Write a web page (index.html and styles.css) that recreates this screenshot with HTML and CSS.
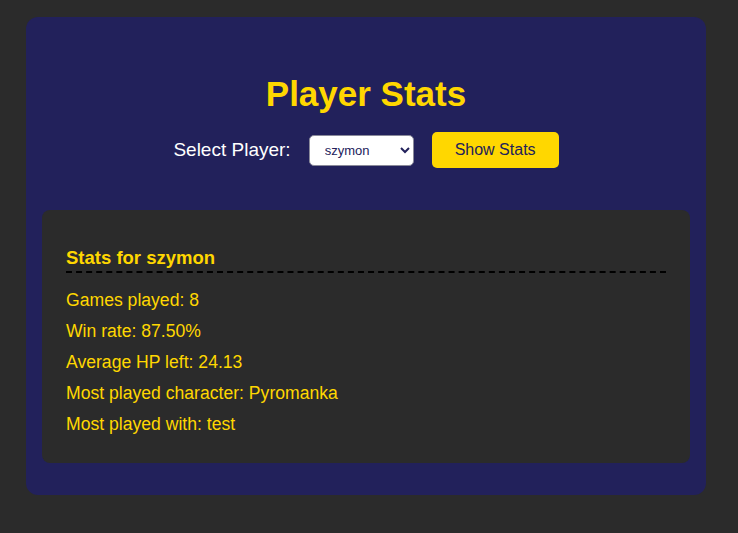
FILE: index.html
```html
<!DOCTYPE html>
<html lang="en">
<head>
<meta charset="utf-8">
<title>Player Stats</title>
<link rel="stylesheet" href="styles.css">
</head>
<body>
<div class="container">
  <h1 class="title">Player Stats</h1>
  <div class="controls">
    <label class="label" for="player">Select Player:</label>
    <select class="select" id="player">
      <option>szymon</option>
      <option>test</option>
    </select>
    <button class="btn">Show Stats</button>
  </div>
  <div class="stats">
    <h3 class="stats-title">Stats for szymon</h3>
    <p class="stat">Games played: 8</p>
    <p class="stat">Win rate: 87.50%</p>
    <p class="stat">Average HP left: 24.13</p>
    <p class="stat">Most played character: Pyromanka</p>
    <p class="stat">Most played with: test</p>
  </div>
</div>
</body>
</html>
```
FILE: styles.css
```css
html, body {
  margin: 0;
  background: #2b2b2b;
  font-family: "Liberation Sans", Arial, sans-serif;
}
body {
  padding: 17px 0 38px 26px;
}
.container {
  width: 680px;
  box-sizing: border-box;
  background: #22215b;
  border-radius: 12px;
  padding: 58px 16px 32px;
}
.title {
  margin: 0;
  text-align: center;
  color: #ffd700;
  font-size: 35px;
  font-weight: bold;
  line-height: 37px;
}
.controls {
  margin-top: 20px;
  display: flex;
  justify-content: center;
  align-items: center;
  gap: 18px;
  height: 36px;
}
.label {
  color: #ffffff;
  font-size: 19px;
}
.select {
  width: 105px;
  height: 31px;
  box-sizing: border-box;
  border: 1px solid #8a8a9a;
  border-radius: 5px;
  background: #ffffff;
  color: #22215b;
  font-family: "Liberation Sans", Arial, sans-serif;
  font-size: 13px;
  padding: 0 6px 0 11px;
}
.btn {
  height: 36px;
  box-sizing: border-box;
  padding: 0 23px;
  border: none;
  border-radius: 5px;
  background: #ffd700;
  color: #22215b;
  font-family: "Liberation Sans", Arial, sans-serif;
  font-size: 16px;
  cursor: pointer;
}
.stats {
  margin-top: 42px;
  background: #2b2b2b;
  border-radius: 8px;
  padding: 37px 24px 18px;
}
.stats-title {
  margin: 0 0 17px;
  padding-bottom: 3px;
  border-bottom: 2px dashed #000000;
  color: #ffd700;
  font-size: 18.5px;
  font-weight: bold;
  line-height: 21px;
}
.stat {
  margin: 0 0 10px;
  color: #ffd700;
  font-size: 17.6px;
  line-height: 21px;
}
```
